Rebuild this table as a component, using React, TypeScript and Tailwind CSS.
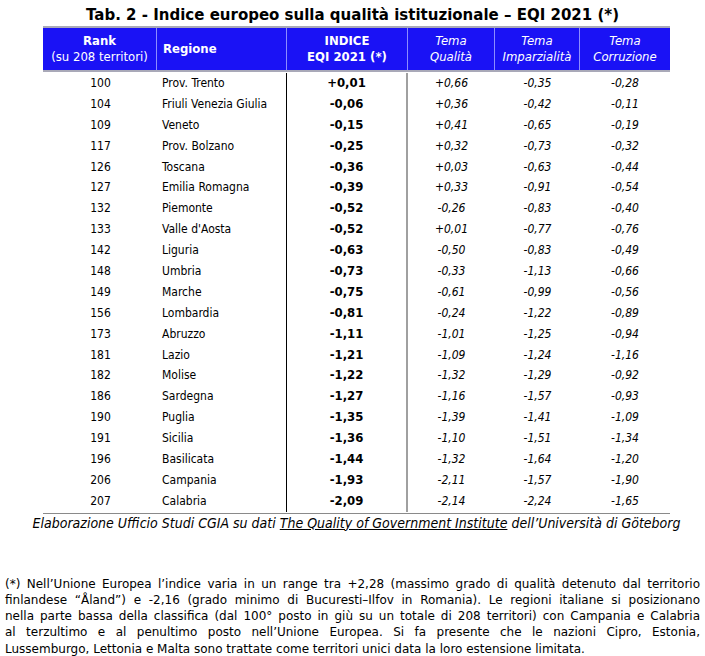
const rows: [string, string, string, string, string, string][] = [
  ["100", "Prov. Trento", "+0,01", "+0,66", "-0,35", "-0,28"],
  ["104", "Friuli Venezia Giulia", "-0,06", "+0,36", "-0,42", "-0,11"],
  ["109", "Veneto", "-0,15", "+0,41", "-0,65", "-0,19"],
  ["117", "Prov. Bolzano", "-0,25", "+0,32", "-0,73", "-0,32"],
  ["126", "Toscana", "-0,36", "+0,03", "-0,63", "-0,44"],
  ["127", "Emilia Romagna", "-0,39", "+0,33", "-0,91", "-0,54"],
  ["132", "Piemonte", "-0,52", "-0,26", "-0,83", "-0,40"],
  ["133", "Valle d'Aosta", "-0,52", "+0,01", "-0,77", "-0,76"],
  ["142", "Liguria", "-0,63", "-0,50", "-0,83", "-0,49"],
  ["148", "Umbria", "-0,73", "-0,33", "-1,13", "-0,66"],
  ["149", "Marche", "-0,75", "-0,61", "-0,99", "-0,56"],
  ["156", "Lombardia", "-0,81", "-0,24", "-1,22", "-0,89"],
  ["173", "Abruzzo", "-1,11", "-1,01", "-1,25", "-0,94"],
  ["181", "Lazio", "-1,21", "-1,09", "-1,24", "-1,16"],
  ["182", "Molise", "-1,22", "-1,32", "-1,29", "-0,92"],
  ["186", "Sardegna", "-1,27", "-1,16", "-1,57", "-0,93"],
  ["190", "Puglia", "-1,35", "-1,39", "-1,41", "-1,09"],
  ["191", "Sicilia", "-1,36", "-1,10", "-1,51", "-1,34"],
  ["196", "Basilicata", "-1,44", "-1,32", "-1,64", "-1,20"],
  ["206", "Campania", "-1,93", "-2,11", "-1,57", "-1,90"],
  ["207", "Calabria", "-2,09", "-2,14", "-2,24", "-1,65"],
];

const note = [
  "(*) Nell’Unione Europea l’indice varia in un range tra +2,28 (massimo grado di qualità detenuto dal territorio",
  "finlandese “Åland”) e -2,16 (grado minimo di Bucuresti–Ilfov in Romania). Le regioni italiane si posizionano",
  "nella parte bassa della classifica (dal 100° posto in giù su un totale di 208 territori) con Campania e Calabria",
  "al terzultimo e al penultimo posto nell’Unione Europea. Si fa presente che le nazioni Cipro, Estonia,",
];

const cols = "grid grid-cols-[114px_130px_121px_87px_85px_90px]";

export default function App() {
  return (
    <div className="w-[705px] h-[656px] bg-white text-black overflow-hidden font-['DejaVu_Sans',sans-serif]">
      {/* Title */}
      <h1 className="pt-[6px] h-[26px] text-center text-[15px] leading-[18px] font-bold whitespace-nowrap">
        Tab. 2 - Indice europeo sulla qualità istituzionale – EQI 2021 (*)
      </h1>

      {/* Table */}
      <div className="ml-[43px] w-[627px] font-['DejaVu_Sans_Condensed','Liberation_Sans',sans-serif] text-[12px]">
        <div className={`${cols} h-[46px] bg-[#1a12f5] text-white text-[13px] border-t-2 border-b-2 border-[#a9a9b8] leading-[16px]`}>
          <div className="flex flex-col items-center justify-center border-r border-[#8c8cff]">
            <span className="font-bold">Rank</span>
            <span>(su 208 territori)</span>
          </div>
          <div className="flex items-center pl-[6px] font-bold border-r border-[#8c8cff]">Regione</div>
          <div className="flex flex-col items-center justify-center font-bold border-r border-[#8c8cff]">
            <span>INDICE</span>
            <span>EQI 2021 (*)</span>
          </div>
          <div className="flex flex-col items-center justify-center italic border-r border-[#8c8cff]">
            <span>Tema</span>
            <span>Qualità</span>
          </div>
          <div className="flex flex-col items-center justify-center italic border-r border-[#8c8cff]">
            <span>Tema</span>
            <span>Imparzialità</span>
          </div>
          <div className="flex flex-col items-center justify-center italic">
            <span>Tema</span>
            <span>Corruzione</span>
          </div>
        </div>

        <div className="border-b border-[#8a8a8a] pt-[1px] pb-[1px]">
          {rows.map((r) => (
            <div key={r[0]} className={`${cols} h-[20.9px] leading-[20.9px]`}>
              <div className="text-center pl-[1px]">{r[0]}</div>
              <div className="pl-[5px] border-r border-black">{r[1]}</div>
              <div className="text-center font-bold text-[13px] border-r-2 border-[#a0a0a0]">{r[2]}</div>
              <div className="text-center italic">{r[3]}</div>
              <div className="text-center italic">{r[4]}</div>
              <div className="text-center italic">{r[5]}</div>
            </div>
          ))}
        </div>

        <p className="text-center italic text-[14px] leading-[18px] -ml-[20px] w-[667px] whitespace-nowrap">
          Elaborazione Ufficio Studi CGIA su dati{" "}
          <span className="underline">The Quality of Government Institute</span> dell’Università di Göteborg
        </p>
      </div>

      {/* Footnote */}
      <div className="mt-[44px] px-[5px] text-[12px] leading-[16.25px]">
        {note.map((line) => (
          <p key={line} className="text-justify [text-align-last:justify] whitespace-nowrap">
            {line}
          </p>
        ))}
        <p className="whitespace-nowrap">
          Lussemburgo, Lettonia e Malta sono trattate come territori unici data la loro estensione limitata.
        </p>
      </div>
    </div>
  );
}
